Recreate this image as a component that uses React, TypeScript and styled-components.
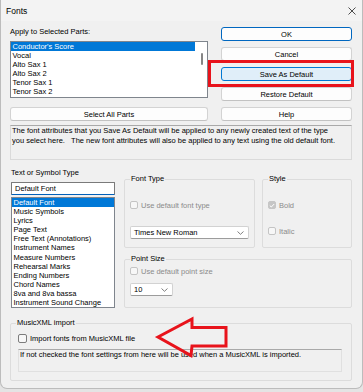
import React from 'react';
import styled, { createGlobalStyle, css } from 'styled-components';

const GlobalStyle = createGlobalStyle`
  html, body { margin: 0; padding: 0; }
  body {
    background: #e4e4e4;
    font-family: "Liberation Sans", Arial, sans-serif;
    font-size: 7.5px;
    color: #000;
  }
  * { box-sizing: border-box; }
`;

const parts = ["Conductor's Score", 'Vocal', 'Alto Sax 1', 'Alto Sax 2', 'Tenor Sax 1', 'Tenor Sax 2'];

const symbolTypes = [
  'Default Font',
  'Music Symbols',
  'Lyrics',
  'Page Text',
  'Free Text (Annotations)',
  'Instrument Names',
  'Measure Numbers',
  'Rehearsal Marks',
  'Ending Numbers',
  'Chord Names',
  '8va and 8va bassa',
  'Instrument Sound Change',
];

const Window = styled.div`
  position: relative;
  width: 363px;
  height: 389px;
  background: #f0f0f0;
  border: 1px solid #bcbcbc;
  border-top: none;
  border-radius: 0 0 7px 7px;
  overflow: hidden;
`;

const TitleBar = styled.div`
  height: 21px;
  display: flex;
  align-items: center;
  justify-content: space-between;
  padding: 0 6px 0 5px;
  background: #f3f3f3;
  font-size: 8.5px;
`;

const Body = styled.div`
  padding: 6px 10px 0 9px;
`;

const TopSection = styled.div`
  display: grid;
  grid-template-columns: 198px 131px;
  column-gap: 13px;
`;

const Column = styled.div`
  display: flex;
  flex-direction: column;
`;

const ButtonStack = styled.div`
  display: flex;
  flex-direction: column;
  gap: 6px;
`;

const FieldLabel = styled.div`
  height: 10px;
  line-height: 10px;
`;

const ListBox = styled.div<{ $height: number; $scroll?: boolean }>`
  position: relative;
  height: ${p => p.$height}px;
  margin-top: ${p => (p.$scroll ? 4 : 2)}px;
  background: #fff;
  border: 1px solid #7f858d;
  padding-right: ${p => (p.$scroll ? 12 : 0)}px;
  overflow: hidden;
`;

const ListItem = styled.div<{ $selected?: boolean }>`
  height: 9.1px;
  line-height: 9.1px;
  padding-left: 1.5px;
  white-space: nowrap;
  ${p =>
    p.$selected &&
    css`
      background: #0078d7;
      color: #fff;
    `}
`;

const ScrollThumb = styled.div`
  position: absolute;
  right: 4.5px;
  top: 11px;
  width: 1.5px;
  height: 12px;
  border-radius: 1px;
  background: #858585;
`;

const Button = styled.button<{ $variant?: 'default' | 'hover' }>`
  height: 14px;
  padding: 0;
  font: inherit;
  color: #000;
  background: #fdfdfd;
  border: 1px solid #d3d3d3;
  border-bottom-color: #c2c2c2;
  border-radius: 3px;
  ${p =>
    p.$variant === 'default' &&
    css`
      border-color: #0067c0;
    `}
  ${p =>
    p.$variant === 'hover' &&
    css`
      background: #e0eef9;
      border-color: #0078d4;
    `}
`;

const WideButton = styled(Button)`
  margin-top: auto;
`;

const Description = styled.div`
  margin-top: 4px;
  height: 35px;
  padding: 0 1px;
  line-height: 10px;
  white-space: pre;
  border: 1px solid #dadada;
  border-top-color: #a9a9a9;
`;

const LowerSection = styled.div`
  margin-top: 8px;
  padding-left: 1px;
  display: grid;
  grid-template-columns: 104px 228px;
  column-gap: 9px;
`;

const Combo = styled.div`
  margin-top: 4px;
  height: 13px;
  line-height: 11px;
  padding: 0 3px;
  background: #fff;
  border: 1px solid #7a7a7a;
  border-bottom-color: #005fb8;
  border-radius: 1px;
`;

const GroupColumn = styled.div`
  margin-top: 6px;
  display: flex;
  flex-direction: column;
  gap: 6px;
`;

const GroupRow = styled.div`
  display: grid;
  grid-template-columns: 131px 90px;
  column-gap: 7px;
`;

const Group = styled.fieldset<{ $height: number }>`
  margin: 0;
  min-width: 0;
  height: ${p => p.$height}px;
  padding: 0 5px;
  border: 1px solid #dcdcdc;
  border-radius: 2px;
`;

const Legend = styled.legend`
  padding: 0 1px;
  line-height: 10px;
  font-size: 7.5px;
`;

const CheckRow = styled.label<{ $top: number; $disabled?: boolean; $indent?: number }>`
  display: flex;
  align-items: center;
  gap: 3px;
  height: 10px;
  margin-top: ${p => p.$top}px;
  padding-left: ${p => p.$indent ?? 0}px;
  color: ${p => (p.$disabled ? '#8b8b8b' : '#000')};
  white-space: nowrap;
`;

const Box = styled.span<{ $checked?: boolean; $disabled?: boolean; $size?: number }>`
  display: inline-flex;
  align-items: center;
  justify-content: center;
  width: ${p => p.$size ?? 8}px;
  height: ${p => p.$size ?? 8}px;
  border-radius: 2px;
  border: 1px solid ${p => (p.$disabled ? '#c4c4c4' : '#7c7c7c')};
  background: ${p => (p.$checked ? '#c6c6c6' : '#f7f7f7')};
  ${p => p.$checked && css`border-color: #c6c6c6;`}
`;

const Select = styled.div<{ $top: number; $width: number }>`
  display: flex;
  align-items: center;
  justify-content: space-between;
  margin-top: ${p => p.$top}px;
  width: ${p => p.$width}px;
  height: 13px;
  padding: 0 4px 0 3px;
  background: #fff;
  border: 1px solid #d2d2d2;
  border-bottom-color: #9c9c9c;
  border-radius: 2px;
`;

const ImportGroup = styled(Group)`
  margin-top: 10px;
`;

const InfoBox = styled.div`
  margin: 6px 4px 0 2px;
  height: 23px;
  line-height: 10px;
  padding: 0 1px;
  border: 1px solid #e0e0e0;
  border-top-color: #a9a9a9;
`;

const Highlight = styled.div`
  position: absolute;
  left: 207px;
  top: 60px;
  width: 146px;
  height: 27px;
  border: 3px solid #e8131b;
`;

const ArrowLayer = styled.svg`
  position: absolute;
  left: 0;
  top: 0;
  pointer-events: none;
`;

const Chevron = () => (
  <svg width="7" height="4" viewBox="0 0 7 4">
    <path d="M0.5 0.5 L3.5 3.3 L6.5 0.5" fill="none" stroke="#5f5f5f" strokeWidth="0.8" />
  </svg>
);

const CheckBox: React.FC<{ checked?: boolean; disabled?: boolean; size?: number }> = ({ checked, disabled, size }) => (
  <Box $checked={checked} $disabled={disabled} $size={size}>
    {checked && (
      <svg width="6" height="5" viewBox="0 0 6 5">
        <path d="M0.8 2.6 L2.3 4 L5.2 1" fill="none" stroke="#fff" strokeWidth="1" />
      </svg>
    )}
  </Box>
);

export default function App() {
  return (
    <>
      <GlobalStyle />
      <Window>
        <TitleBar>
          <span>Fonts</span>
          <svg width="8" height="8" viewBox="0 0 8 8">
            <path d="M0.5 0.5 L7.5 7.5 M7.5 0.5 L0.5 7.5" stroke="#222" strokeWidth="0.8" />
          </svg>
        </TitleBar>
        <Body>
          <TopSection>
            <Column>
              <FieldLabel>Apply to Selected Parts:</FieldLabel>
              <ListBox $height={57} $scroll>
                {parts.map((p, i) => (
                  <ListItem key={p} $selected={i === 0}>{p}</ListItem>
                ))}
                <ScrollThumb />
              </ListBox>
              <WideButton>Select All Parts</WideButton>
            </Column>
            <ButtonStack>
              <Button $variant="default">OK</Button>
              <Button>Cancel</Button>
              <Button $variant="hover">Save As Default</Button>
              <Button>Restore Default</Button>
              <Button>Help</Button>
            </ButtonStack>
          </TopSection>

          <Description>
            {'The font attributes that you Save As Default will be applied to any newly created text of the type\nyou select here.   The new font attributes will also be applied to any text using the old default font.'}
          </Description>

          <LowerSection>
            <Column>
              <FieldLabel>Text or Symbol Type</FieldLabel>
              <Combo>Default Font</Combo>
              <ListBox $height={111}>
                {symbolTypes.map((t, i) => (
                  <ListItem key={t} $selected={i === 0}>{t}</ListItem>
                ))}
              </ListBox>
            </Column>
            <GroupColumn>
              <GroupRow>
                <Group $height={74}>
                  <Legend>Font Type</Legend>
                  <CheckRow $top={16} $disabled>
                    <CheckBox disabled />
                    Use default font type
                  </CheckRow>
                  <Select $top={16} $width={119}>
                    <span>Times New Roman</span>
                    <Chevron />
                  </Select>
                </Group>
                <Group $height={74}>
                  <Legend>Style</Legend>
                  <CheckRow $top={16} $disabled>
                    <CheckBox checked disabled />
                    Bold
                  </CheckRow>
                  <CheckRow $top={16} $disabled>
                    <CheckBox disabled />
                    Italic
                  </CheckRow>
                </Group>
              </GroupRow>
              <Group $height={54}>
                <Legend>Point Size</Legend>
                <CheckRow $top={2} $disabled>
                  <CheckBox disabled />
                  Use default point size
                </CheckRow>
                <Select $top={7} $width={43}>
                  <span>10</span>
                  <Chevron />
                </Select>
              </Group>
            </GroupColumn>
          </LowerSection>

          <ImportGroup $height={63}>
            <Legend>MusicXML import</Legend>
            <CheckRow $top={5} $indent={2}>
              <CheckBox size={9} />
              Import fonts from MusicXML file
            </CheckRow>
            <InfoBox>If not checked the font settings from here will be used when a MusicXML is imported.</InfoBox>
          </ImportGroup>
        </Body>

        <Highlight />
        <ArrowLayer width="363" height="389" viewBox="0 0 363 389">
          <polygon
            points="157,337 191,319 191,327.5 225,327.5 225,346 191,346 190,355.5"
            fill="none"
            stroke="#e8131b"
            strokeWidth="3"
            strokeLinejoin="miter"
          />
        </ArrowLayer>
      </Window>
    </>
  );
}
